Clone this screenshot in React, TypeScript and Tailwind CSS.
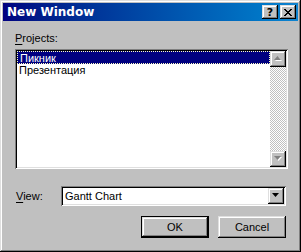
import React from 'react';

const raised =
  'bg-[#c0c0c0] shadow-[inset_-1px_-1px_#000000,inset_1px_1px_#dfdfdf,inset_-2px_-2px_#808080,inset_2px_2px_#ffffff]';
const sunken =
  'shadow-[inset_1px_1px_#808080,inset_-1px_-1px_#ffffff,inset_2px_2px_#000000,inset_-2px_-2px_#dfdfdf]';

function TitleButton({ children }: { children: React.ReactNode }) {
  return (
    <div className={`w-[16px] h-[14px] flex items-center justify-center ${raised}`}>
      {children}
    </div>
  );
}

function ScrollArrow({ down, disabled }: { down?: boolean; disabled?: boolean }) {
  const pts = down ? '0,0 7,0 3.5,4' : '0,4 7,4 3.5,0';
  return (
    <svg width="8" height="6" viewBox="0 0 8 6" className="block">
      {disabled && <polygon points={down ? '1,1 8,1 4.5,5' : '1,5 8,5 4.5,1'} fill="#ffffff" />}
      <polygon points={pts} fill={disabled ? '#808080' : '#000000'} />
    </svg>
  );
}

export default function App() {
  const items = ['Пикник', 'Презентация'];

  return (
    <div
      className={`w-[301px] h-[252px] p-[3px] flex flex-col ${raised} text-[11px] leading-[13px] text-black`}
      style={{ fontFamily: '"Liberation Sans", Arial, sans-serif' }}
    >
      {/* Title bar */}
      <div className="h-[18px] flex items-center justify-between pl-[4px] pr-[2px] bg-linear-to-r from-[#000080] to-[#1084d0]">
        <span className="text-white font-bold text-[12px]" style={{ fontFamily: '"DejaVu Sans", sans-serif' }}>
          New Window
        </span>
        <div className="flex gap-[2px]">
          <TitleButton>
            <span className="font-bold text-[11px] leading-none text-black" style={{ fontFamily: '"DejaVu Sans", sans-serif' }}>?</span>
          </TitleButton>
          <TitleButton>
            <svg width="8" height="7" viewBox="0 0 8 7" className="block">
              <path d="M0 0h2v1h1v1h2V1h1V0h2v1H7v1H6v1H5v1h1v1h1v1h1v1H6V6H5V5H3v1H2v1H0V6h1V5h1V4h1V3H2V2H1V1H0z" fill="#000" />
            </svg>
          </TitleButton>
        </div>
      </div>

      {/* Body */}
      <div className="flex flex-col pl-[12px]">
        <div className="mt-[11px] mb-[4px]">
          <span className="underline underline-offset-2">P</span>rojects:
        </div>

        {/* List box */}
        <div className={`w-[273px] h-[120px] bg-white p-[2px] flex ${sunken}`}>
          <div className="flex-1 flex flex-col">
            {items.map((item, i) => (
              <div
                key={item}
                className={`h-[13px] pl-[2px] leading-[12px] ${
                  i === 0 ? 'bg-[#000080] text-white border border-dotted border-[#ffffc0] pl-[1px]' : ''
                }`}
              >
                {item}
              </div>
            ))}
          </div>
          <div className="w-[16px] flex flex-col bg-[repeating-conic-gradient(#c0c0c0_0%_25%,#ffffff_0%_50%)] bg-size-[2px_2px]">
            <div className={`h-[16px] flex items-center justify-center ${raised}`}>
              <ScrollArrow disabled />
            </div>
            <div className="flex-1" />
            <div className={`h-[16px] flex items-center justify-center ${raised}`}>
              <ScrollArrow down disabled />
            </div>
          </div>
        </div>

        {/* View row */}
        <div className="mt-[17px] flex items-center">
          <div className="w-[46px] pl-[1px]">
            <span className="underline underline-offset-2">V</span>iew:
          </div>
          <div className={`w-[225px] h-[20px] bg-white p-[2px] flex items-center ${sunken}`}>
            <div className="flex-1 pl-[2px]">Gantt Chart</div>
            <div className={`w-[16px] h-[16px] flex items-center justify-center ${raised}`}>
              <ScrollArrow down />
            </div>
          </div>
        </div>

        {/* Buttons */}
        <div className="mt-[10px] flex justify-end gap-[9px] pr-[12px]">
          <div className="w-[68px] h-[22px] border border-black">
            <div className={`w-full h-full flex items-center justify-center ${raised}`}>OK</div>
          </div>
          <div className={`w-[68px] h-[22px] flex items-center justify-center ${raised}`}>Cancel</div>
        </div>
      </div>
    </div>
  );
}
